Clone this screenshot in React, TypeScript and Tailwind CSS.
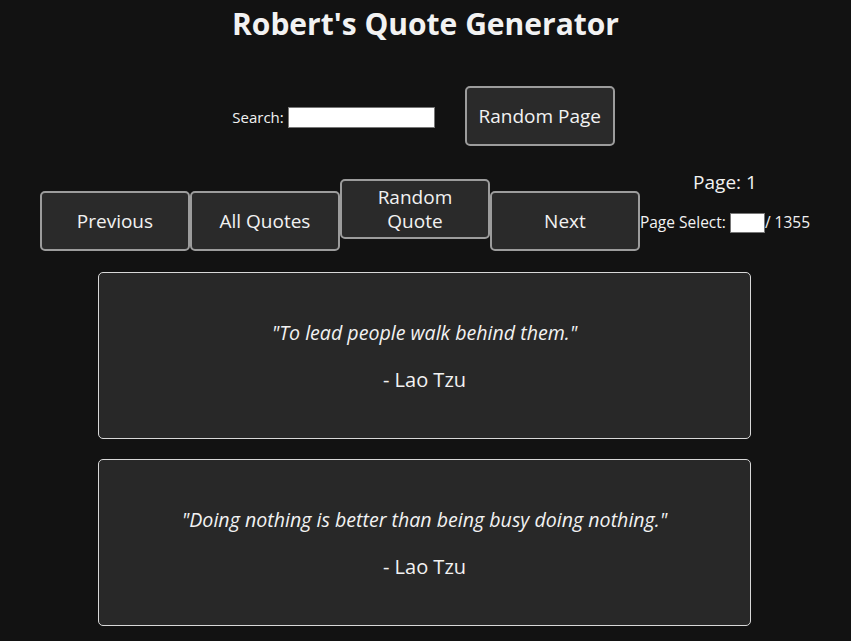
import React from "react";

const quotes = [
  { text: "To lead people walk behind them.", author: "Lao Tzu" },
  { text: "Doing nothing is better than being busy doing nothing.", author: "Lao Tzu" },
];

const btn =
  "w-[150px] h-[60px] bg-[#2a2a2a] border-2 border-[#9c9c9c] rounded-[5px] text-[19px] leading-[24px] text-[#f2f2f2] px-2";

export default function App() {
  return (
    <div
      className="min-h-[641px] bg-[#121212] text-[#f2f2f2] overflow-hidden"
      style={{ fontFamily: '"Open Sans", "Noto Sans", sans-serif' }}
    >
      <h1 className="text-center font-bold text-[30px] leading-[40px] pt-[4px]">
        Robert's Quote Generator
      </h1>

      <div className="flex justify-center items-baseline mt-[42px] pr-[4px]">
        <label className="text-[15px]">Search:</label>
        <input
          type="text"
          className="ml-[4px] w-[147px] h-[21px] bg-white border border-[#767676] text-black text-[14px]"
        />
        <button className={btn + " ml-[30px]"}>Random Page</button>
      </div>

      <div className="flex justify-center items-baseline-last mt-[24px] pr-[1px]">
        <button className={btn}>Previous</button>
        <button className={btn}>All Quotes</button>
        <button className={btn}>Random Quote</button>
        <button className={btn}>Next</button>
        <div className="text-center">
          <p className="text-[19px] leading-[24px] mb-[18px]">Page: 1</p>
          <p className="text-[15.5px] leading-[20px] flex items-baseline">
            Page Select:
            <input
              type="text"
              className="ml-[4px] w-[35px] h-[20px] bg-white border border-[#767676] text-black text-[13px]"
            />
            / 1355
          </p>
        </div>
      </div>

      <div className="flex flex-col items-center gap-[20px] mt-[21px] pr-[2px]">
        {quotes.map((q) => (
          <div
            key={q.text}
            className="w-[653px] h-[167px] bg-[#282828] border border-[#d8d8d8] rounded-[5px] flex flex-col items-center pt-[46px]"
          >
            <p className="italic text-[19.6px] leading-[28px]">"{q.text}"</p>
            <p className="text-[20px] leading-[28px] mt-[19px]">- {q.author}</p>
          </div>
        ))}
      </div>
    </div>
  );
}
